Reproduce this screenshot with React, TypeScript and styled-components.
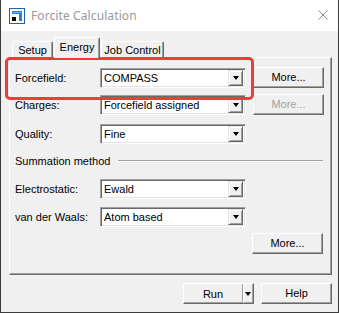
import * as React from 'react'
import styled, { createGlobalStyle } from 'styled-components'

const GlobalStyle = createGlobalStyle`
  html, body {
    margin: 0;
    padding: 0;
    background: #f0f0f0;
  }
  * {
    box-sizing: border-box;
  }
`

const Window = styled.div`
  position: relative;
  width: 339px;
  height: 313px;
  background: #f0f0f0;
  border: 1px solid #3c3c3c;
  border-top: none;
  font-family: 'Liberation Sans', Arial, sans-serif;
  font-size: 11px;
  color: #000;
  overflow: hidden;
`

const TitleBar = styled.div`
  height: 31px;
  background: #fff;
  display: flex;
  align-items: center;
  padding-left: 8px;
`

const Title = styled.span`
  margin-left: 6px;
  font-family: 'Noto Sans', 'Open Sans', sans-serif;
  font-size: 12px;
  color: #999;
  letter-spacing: 0.1px;
`

const Close = styled.div`
  margin-left: auto;
  margin-right: 10px;
  width: 10px;
  height: 10px;
  display: flex;
  margin-top: -2px;
`

const Body = styled.div`
  padding: 6px 6px 0 8px;
`

const TabStrip = styled.div`
  height: 20px;
  display: flex;
  align-items: flex-end;
  padding-left: 3px;
  position: relative;
  z-index: 1;
`

const Tab = styled.div<{ $w: number; $active?: boolean }>`
  width: ${p => p.$w}px;
  height: ${p => (p.$active ? 21 : 16)}px;
  margin-bottom: ${p => (p.$active ? -1 : 0)}px;
  margin-right: 1px;
  background: #f0f0f0;
  border: 1px solid;
  border-color: #fff #696969 transparent #fff;
  border-bottom: none;
  border-radius: 2px 2px 0 0;
  box-shadow: inset -1px 0 #a0a0a0;
  display: flex;
  justify-content: center;
  padding-top: ${p => (p.$active ? 3 : 2)}px;
`

const Panel = styled.div`
  width: 323px;
  height: 218px;
  border: 1px solid;
  border-color: #fff #696969 #696969 #fff;
  box-shadow: inset -1px -1px #a0a0a0;
  padding: 9px 8px 0 5px;
`

const Row = styled.div<{ $mt?: number }>`
  display: grid;
  grid-template-columns: 85px 146px 78px;
  align-items: center;
  height: 21px;
  margin-top: ${p => p.$mt || 0}px;
`

const Label = styled.span`
  white-space: nowrap;
`

const Combo = styled.div`
  height: 20px;
  background: #fff;
  border: 1px solid;
  border-color: #a0a0a0 #fff #fff #a0a0a0;
  box-shadow: inset 1px 1px #696969, inset -1px -1px #e3e3e3;
  display: flex;
  align-items: center;
  padding: 2px 2px 2px 3px;
`

const ComboText = styled.span`
  flex: 1;
  white-space: nowrap;
  overflow: hidden;
  padding-top: 1px;
`

const DropButton = styled.div`
  width: 15px;
  height: 16px;
  background: #f0f0f0;
  border: 1px solid;
  border-color: #e3e3e3 #696969 #696969 #e3e3e3;
  box-shadow: inset 1px 1px #fff, inset -1px -1px #a0a0a0;
  display: flex;
  align-items: center;
  justify-content: center;
`

const Arrow = styled.span`
  width: 0;
  height: 0;
  border-left: 3.5px solid transparent;
  border-right: 3.5px solid transparent;
  border-top: 4px solid #000;
`

const Button = styled.div<{ $disabled?: boolean }>`
  height: 21px;
  width: 71px;
  background: #f0f0f0;
  border: 1px solid;
  border-color: #fff #696969 #696969 #fff;
  box-shadow: inset -1px -1px #a0a0a0;
  display: flex;
  align-items: center;
  justify-content: center;
  color: ${p => (p.$disabled ? '#a0a0a0' : '#000')};
  padding-bottom: 1px;
  justify-self: end;
`

const Section = styled.div`
  display: flex;
  align-items: center;
  height: 13px;
  margin-top: 10px;
`

const Rule = styled.div`
  flex: 1;
  margin-left: 8px;
  border-top: 1px solid #a0a0a0;
  border-bottom: 1px solid #fff;
`

const RightRow = styled.div<{ $mt?: number }>`
  display: flex;
  justify-content: flex-end;
  margin-top: ${p => p.$mt || 0}px;
`

const Footer = styled.div`
  width: 323px;
  display: flex;
  justify-content: flex-end;
  gap: 7px;
  margin-top: 8px;
`

const SplitButton = styled(Button)`
  padding: 0;
  justify-content: flex-start;
`

const SplitLabel = styled.span`
  width: 59px;
  height: 100%;
  display: flex;
  align-items: center;
  justify-content: center;
  border-right: 1px solid #a0a0a0;
  box-shadow: 1px 0 #fff;
`

const SplitArrow = styled.span`
  flex: 1;
  display: flex;
  align-items: center;
  justify-content: center;
`

const Highlight = styled.div`
  position: absolute;
  left: 4px;
  top: 57px;
  width: 249px;
  height: 43px;
  border: 3px solid #f23a3a;
  border-radius: 5px;
  pointer-events: none;
`

const AppIcon = () => (
  <svg width="16" height="16" viewBox="0 0 16 16">
    <rect x="0.5" y="0.5" width="15" height="15" fill="#fff" stroke="#1d64b0" />
    <path d="M3 3h10v10h-3V6H3z" fill="#2a7fd6" />
    <path d="M4 4h8v1H4z" fill="#6fb3f0" />
    <rect x="3" y="9" width="4" height="4" fill="#000" />
  </svg>
)

const CloseIcon = () => (
  <svg width="10" height="10" viewBox="0 0 10 10">
    <path d="M0.5 0.5l9 9M9.5 0.5l-9 9" stroke="#8a8a8a" strokeWidth="1" />
  </svg>
)

const Select = ({ value }: { value: string }) => (
  <Combo>
    <ComboText>{value}</ComboText>
    <DropButton>
      <Arrow />
    </DropButton>
  </Combo>
)

const rows = [
  { label: 'Forcefield:', value: 'COMPASS', more: true, mt: 0 },
  { label: 'Charges:', value: 'Forcefield assigned', more: true, disabled: true, mt: 6 },
  { label: 'Quality:', value: 'Fine', mt: 8 }
]

const summationRows = [
  { label: 'Electrostatic:', value: 'Ewald', mt: 11 },
  { label: 'van der Waals:', value: 'Atom based', mt: 7 }
]

export default function App() {
  return (
    <>
      <GlobalStyle />
      <Window>
        <TitleBar>
          <AppIcon />
          <Title>Forcite Calculation</Title>
          <Close>
            <CloseIcon />
          </Close>
        </TitleBar>
        <Body>
          <TabStrip>
            <Tab $w={41}>Setup</Tab>
            <Tab $w={46} $active>
              Energy
            </Tab>
            <Tab $w={63}>Job Control</Tab>
          </TabStrip>
          <Panel>
            {rows.map(r => (
              <Row key={r.label} $mt={r.mt}>
                <Label>{r.label}</Label>
                <Select value={r.value} />
                {r.more && <Button $disabled={r.disabled}>More...</Button>}
              </Row>
            ))}
            <Section>
              <Label>Summation method</Label>
              <Rule />
            </Section>
            {summationRows.map(r => (
              <Row key={r.label} $mt={r.mt}>
                <Label>{r.label}</Label>
                <Select value={r.value} />
              </Row>
            ))}
            <RightRow $mt={6}>
              <Button>More...</Button>
            </RightRow>
          </Panel>
          <Footer>
            <SplitButton>
              <SplitLabel>Run</SplitLabel>
              <SplitArrow>
                <Arrow />
              </SplitArrow>
            </SplitButton>
            <Button>Help</Button>
          </Footer>
        </Body>
        <Highlight />
      </Window>
    </>
  )
}
